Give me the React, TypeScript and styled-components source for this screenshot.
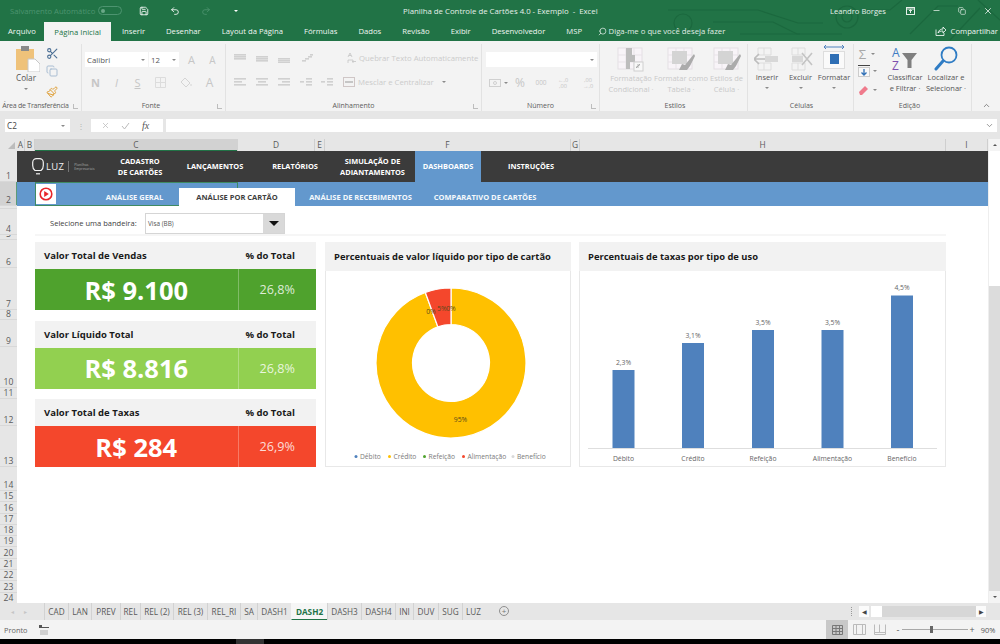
import React from "react";
import styled, { createGlobalStyle } from "styled-components";
import { Save, Undo2, Redo2, Scissors, Copy, Paintbrush, Search, X, Minus, ChevronDown, ChevronUp } from "lucide-react";

const GlobalStyle = createGlobalStyle`
  html, body { margin: 0; padding: 0; background: #000; }
  * { box-sizing: border-box; }
  #root { font-family: "Open Sans", "Liberation Sans", sans-serif; }
`;

const Screen = styled.div`
  width: 1000px;
  height: 644px;
  display: flex;
  flex-direction: column;
  overflow: hidden;
  position: relative;
  background: #000;
  color: #444;
`;

/* title bar + tabs share the green backdrop and the circuit drawing */
const GreenHead = styled.div`
  position: relative;
  height: 41px;
  flex: none;
  background: #217346;
  color: #f0f6f2;
  display: flex;
  flex-direction: column;
`;

const Circuit = styled.svg`
  position: absolute;
  left: 640px;
  top: 0;
  pointer-events: none;
`;

const TitleBar = styled.div`
  height: 21px;
  display: flex;
  align-items: center;
  font-size: 7.7px;
  position: relative;
  & > * { flex: none; }
`;

const AutoSave = styled.span`
  margin-left: 10px;
  width: 88px;
  color: #4d9470;
  white-space: nowrap;
`;

const Toggle = styled.span`
  width: 24px;
  height: 9px;
  border: 1px solid #4d9470;
  border-radius: 5px;
  display: flex;
  align-items: center;
  padding-left: 2px;
  &::before {
    content: "";
    width: 4px;
    height: 4px;
    border-radius: 50%;
    background: #6aa888;
  }
`;

const QuickBtn = styled.span<{ $w: number; $dim?: boolean }>`
  width: ${(p) => p.$w}px;
  display: flex;
  justify-content: center;
  color: ${(p) => (p.$dim ? "#4d9470" : "#fff")};
`;

const TitleGap = styled.span`
  width: 160px;
`;

const DocTitle = styled.span`
  width: 427px;
  white-space: pre;
  color: #e6f0ea;
  font-size: 7.8px;
`;

const UserName = styled.span`
  width: 67px;
  color: #e6f0ea;
  font-size: 7.6px;
`;

const WinBtn = styled.span`
  width: 26px;
  display: flex;
  justify-content: center;
  color: #e6f0ea;
`;

const TabRow = styled.div`
  height: 20px;
  display: flex;
  align-items: stretch;
  font-size: 7.7px;
  position: relative;
`;

const RibbonTab = styled.span<{ $active?: boolean; $first?: boolean }>`
  padding: 0 10.5px;
  display: flex;
  align-items: center;
  white-space: nowrap;
  ${(p) => p.$first && "margin:0 -2.5px;"}
  ${(p) => p.$active && "background:#f3f3f3;color:#217346;margin-top:1px;"}
`;

const TellMe = styled.span`
  display: flex;
  align-items: center;
  gap: 2px;
  margin-left: 5px;
  white-space: nowrap;
  font-size: 7.75px;
  color: #e0ece5;
`;

const Share = styled.span`
  margin-left: auto;
  padding-right: 2px;
  display: flex;
  align-items: center;
  gap: 5px;
  white-space: nowrap;
`;

/* ribbon */
const Ribbon = styled.div`
  height: 70px;
  flex: none;
  display: flex;
  background: #f3f3f3;
  font-size: 7.6px;
`;

const Group = styled.div<{ $w: number; $pad?: number }>`
  width: ${(p) => p.$w}px;
  flex: none;
  position: relative;
  display: flex;
  flex-direction: column;
  padding-left: ${(p) => p.$pad ?? 0}px;
  border-right: 1px solid #e2e2e2;
  margin: 3px 0 0;
`;

const GroupBody = styled.div<{ $top?: number; $gap?: number; $row?: boolean }>`
  flex: 1;
  display: flex;
  flex-direction: ${(p) => (p.$row ? "row" : "column")};
  padding-top: ${(p) => p.$top ?? 8}px;
  gap: ${(p) => p.$gap ?? 0}px;
  min-height: 0;
`;

const GroupLabel = styled.div<{ $shift?: number; $tight?: boolean }>`
  height: 11px;
  flex: none;
  margin-left: ${(p) => p.$shift ?? 0}px;
  text-align: center;
  color: #5c5c5c;
  font-size: 7px;
  line-height: 12px;
  letter-spacing: ${(p) => (p.$tight ? "-0.25px" : "0")};
  white-space: nowrap;
`;

const Launcher = styled.i`
  position: absolute;
  right: 3px;
  bottom: 2px;
  width: 5px;
  height: 5px;
  border-left: 1px solid #bdbdbd;
  border-bottom: 1px solid #bdbdbd;
`;

const ToolRow = styled.div<{ $h?: number; $mt?: number }>`
  display: flex;
  align-items: center;
  height: ${(p) => p.$h ?? 15}px;
  margin-top: ${(p) => p.$mt ?? 0}px;
  flex: none;
`;

const Cell = styled.span<{ $w: number; $dim?: boolean; $size?: number; $bold?: boolean }>`
  width: ${(p) => p.$w}px;
  flex: none;
  display: flex;
  align-items: center;
  justify-content: center;
  color: ${(p) => (p.$dim ? "#c6c6c6" : "#555")};
  font-size: ${(p) => p.$size ?? 8}px;
  font-weight: ${(p) => (p.$bold ? 700 : 400)};
  white-space: nowrap;
`;

const DecimalGlyph = styled.span<{ $w: number }>`
  width: ${(p) => p.$w}px;
  flex: none;
  display: flex;
  flex-direction: column;
  align-items: center;
  color: #c6c6c6;
  font-size: 5.6px;
  line-height: 6px;
`;

const SelectBox = styled.span<{ $w: number }>`
  width: ${(p) => p.$w}px;
  height: 15px;
  background: #fff;
  flex: none;
  display: flex;
  align-items: center;
  justify-content: space-between;
  padding: 0 3px 0 2px;
  color: #555;
  font-size: 7.8px;
  margin-right: 1px;
`;

const Caret = styled.i`
  width: 0;
  height: 0;
  border-left: 2px solid transparent;
  border-right: 2px solid transparent;
  border-top: 2px solid #8a8a8a;
  flex: none;
`;

const DimText = styled.span`
  color: #cbcbcb;
  font-size: 7.75px;
  white-space: nowrap;
`;

const BigBtn = styled.div<{ $w: number; $dim?: boolean }>`
  width: ${(p) => p.$w}px;
  flex: none;
  display: flex;
  flex-direction: column;
  align-items: center;
  color: ${(p) => (p.$dim ? "#c9c9c9" : "#555")};
  font-size: 7.5px;
  line-height: 11px;
  white-space: nowrap;
`;

const BigIcon = styled.div`
  height: 25px;
  margin-bottom: 1px;
  flex: none;
  display: flex;
  align-items: flex-end;
`;

const Stack = styled.div<{ $w: number }>`
  width: ${(p) => p.$w}px;
  flex: none;
  display: flex;
  flex-direction: column;
  align-items: center;
`;

const CollapseBtn = styled.div`
  flex: 1;
  display: flex;
  align-items: flex-end;
  justify-content: center;
  padding-bottom: 1px;
  color: #666;
`;

/* formula bar */
const FormulaBar = styled.div`
  height: 28px;
  flex: none;
  background: #e6e6e6;
  display: flex;
  align-items: flex-start;
  padding: 8px 3px 0 5px;
`;

const NameBox = styled.div`
  width: 65px;
  height: 13px;
  background: #fff;
  display: flex;
  align-items: center;
  justify-content: space-between;
  padding: 0 5px 0 2px;
  font-size: 8.2px;
  color: #444;
`;

const Grip = styled.div`
  width: 21px;
  height: 13px;
  display: flex;
  justify-content: center;
  align-items: center;
  color: #b5b5b5;
  font-size: 8px;
`;

const FxBox = styled.div`
  width: 72px;
  height: 13px;
  background: #fff;
  display: flex;
  align-items: center;
  justify-content: space-around;
  padding: 0 8px 0 4px;
  color: #bbb;
  margin-right: 3px;
`;

const Fx = styled.i`
  font-family: "Liberation Serif", serif;
  font-size: 10px;
  color: #555;
`;

const FormulaInput = styled.div`
  flex: 1;
  height: 13px;
  background: #fff;
  display: flex;
  align-items: center;
  justify-content: flex-end;
  padding-right: 3px;
  color: #777;
`;

/* sheet */
const Workspace = styled.div`
  flex: 1;
  min-height: 0;
  display: flex;
  background: #fff;
`;

const SheetArea = styled.div`
  flex: 1;
  min-width: 0;
  display: flex;
  flex-direction: column;
`;

const ColHeaders = styled.div`
  height: 12px;
  flex: none;
  display: flex;
  background: #e6e6e6;
`;

const Corner = styled.div`
  width: 17px;
  flex: none;
  display: flex;
  justify-content: flex-end;
  align-items: flex-end;
  padding: 0 2px 2px 0;
  &::after {
    content: "";
    border-left: 7px solid transparent;
    border-bottom: 7px solid #bcbcbc;
  }
`;

const ColHead = styled.div<{ $w: number; $sel?: boolean }>`
  width: ${(p) => p.$w}px;
  flex: none;
  text-align: center;
  font-size: 8.4px;
  line-height: 12px;
  color: #5a5a5a;
  border-right: 1px solid ${(p) => (p.$sel ? "transparent" : "#cfcfcf")};
  background: ${(p) => (p.$sel ? "#d2d2d2" : "transparent")};
  ${(p) => p.$sel && "box-shadow: inset 0 -1px 0 #217346;"}
`;

const SheetBody = styled.div`
  flex: 1;
  min-height: 0;
  display: flex;
`;

const RowHeaders = styled.div`
  width: 17px;
  flex: none;
  background: #e6e6e6;
  overflow: hidden;
`;

const RowHead = styled.div<{ $h: number; $sel?: boolean }>`
  height: ${(p) => p.$h}px;
  font-size: 8.6px;
  line-height: 10px;
  color: #5a5a5a;
  text-align: center;
  display: flex;
  align-items: flex-end;
  justify-content: center;
  overflow: hidden;
  border-bottom: 1px solid #d8d8d8;
  background: ${(p) => (p.$sel ? "#d2d2d2" : "transparent")};
  ${(p) => p.$sel && "box-shadow: inset -1px 0 0 #5c9b78;"}
`;

const Dashboard = styled.div`
  flex: 1;
  min-width: 0;
  display: flex;
  flex-direction: column;
`;

const NavBar = styled.div`
  height: 31px;
  flex: none;
  display: flex;
  background: #3b3b3b;
  color: #fff;
`;

const LogoBox = styled.div`
  width: 88px;
  flex: none;
  display: flex;
  align-items: center;
  padding-left: 15px;
  gap: 2px;
`;

const LogoWord = styled.span`
  font-size: 9.5px;
  letter-spacing: 0.3px;
  color: #f2f2f2;
  padding-right: 4px;
  border-right: 1px solid #777;
  line-height: 11px;
`;

const LogoSub = styled.span`
  font-size: 3.4px;
  line-height: 4px;
  color: #aaa;
  margin-left: 3px;
`;

const NavItem = styled.div<{ $w: number; $active?: boolean; $endPad?: number }>`
  width: ${(p) => p.$w}px;
  flex: none;
  display: flex;
  align-items: center;
  justify-content: center;
  padding-right: ${(p) => p.$endPad ?? 0}px;
  text-align: center;
  font-size: 7.4px;
  line-height: 11px;
  font-weight: 700;
  background: ${(p) => (p.$active ? "#6398cd" : "transparent")};
`;

const SubBar = styled.div`
  height: 24px;
  flex: none;
  position: relative;
  display: flex;
  align-items: flex-end;
  background: #6398cd;
  color: #fff;
`;

const CellSelection = styled.div`
  position: absolute;
  left: 18px;
  top: 0;
  width: 203px;
  height: 24px;
  border: 1px solid #3f8a62;
  pointer-events: none;
`;

const PlayBtn = styled.div`
  position: absolute;
  left: 19px;
  top: 2px;
  width: 20px;
  height: 20px;
  background: #fff;
  display: flex;
  align-items: center;
  justify-content: center;
`;

const SubGap = styled.span<{ $w: number }>`
  width: ${(p) => p.$w}px;
  flex: none;
`;

const SubItem = styled.div<{ $w: number; $active?: boolean }>`
  width: ${(p) => p.$w}px;
  height: 18px;
  flex: none;
  position: relative;
  display: flex;
  align-items: center;
  justify-content: center;
  font-size: 7.5px;
  font-weight: 700;
  white-space: nowrap;
  background: ${(p) => (p.$active ? "#fff" : "transparent")};
  color: ${(p) => (p.$active ? "#3f3f3f" : "#f4f8fc")};
`;

const SelectorRow = styled.div`
  height: 30px;
  flex: none;
  width: 911px;
  display: flex;
  align-items: flex-start;
  padding: 7px 0 0 15px;
  margin-left: 18px;
  border-bottom: 2px solid #f6f6f6;
`;

const SelectorLabel = styled.span`
  width: 95px;
  flex: none;
  font-size: 7.55px;
  line-height: 20px;
  color: #404040;
  white-space: nowrap;
`;

const Combo = styled.div`
  width: 140px;
  height: 21px;
  border: 1px solid #d5d5d5;
  display: flex;
  align-items: center;
  justify-content: space-between;
  padding-left: 2px;
  font-size: 6.4px;
  color: #555;
`;

const ComboArrow = styled.div`
  width: 21px;
  height: 19px;
  background: #d9d9d9;
  display: flex;
  align-items: center;
  justify-content: center;
  &::after {
    content: "";
    border-left: 5px solid transparent;
    border-right: 5px solid transparent;
    border-top: 5px solid #111;
  }
`;

const Panels = styled.div`
  display: flex;
  padding: 6px 0 0 18px;
  gap: 9px;
`;

const KpiColumn = styled.div`
  width: 281px;
  flex: none;
  display: flex;
  flex-direction: column;
  gap: 10.5px;
`;

const Kpi = styled.div`
  display: grid;
  grid-template-columns: 202.5px 1fr;
  grid-template-rows: 27px 41px;
`;

const KpiHead = styled.div<{ $center?: boolean }>`
  background: #f2f2f2;
  display: flex;
  align-items: center;
  justify-content: ${(p) => (p.$center ? "center" : "flex-start")};
  padding: ${(p) => (p.$center ? "0 13px 0 0" : "0 0 0 9px")};
  font-size: 9.5px;
  font-weight: 700;
  color: #1a1a1a;
  white-space: nowrap;
`;

const KpiValue = styled.div<{ $bg: string }>`
  background: ${(p) => p.$bg};
  color: #fff;
  display: flex;
  align-items: center;
  justify-content: center;
  font-size: 25.5px;
  font-weight: 700;
  white-space: nowrap;
`;

const KpiPct = styled.div<{ $bg: string }>`
  background: ${(p) => p.$bg};
  border-left: 1px solid rgba(255, 255, 255, 0.28);
  color: rgba(255, 255, 255, 0.82);
  display: flex;
  align-items: center;
  justify-content: center;
  font-size: 12.6px;
`;

const ChartCard = styled.div<{ $w: number; $pull?: number }>`
  width: ${(p) => p.$w}px;
  height: 225px;
  flex: none;
  margin-left: ${(p) => p.$pull ?? 0}px;
  border: 1px solid #e8e8e8;
  border-top: 0;
  display: flex;
  flex-direction: column;
`;

const ChartHead = styled.div`
  height: 29px;
  flex: none;
  background: #f2f2f2;
  margin: 0 -1px;
  padding-left: 9px;
  display: flex;
  align-items: center;
  font-size: 9.4px;
  font-weight: 700;
  color: #1a1a1a;
  white-space: nowrap;
`;

const ChartSvg = styled.svg`
  display: block;
  flex: 1;
  font-family: "Open Sans", "Liberation Sans", sans-serif;
`;

/* right scrollbar */
const VScroll = styled.div`
  width: 12px;
  flex: none;
  display: flex;
  flex-direction: column;
  background: #dcdcdc;
  border-left: 1px solid #eee;
`;

const ScrollArrow = styled.div`
  height: 12px;
  flex: none;
  background: #f4f4f4;
  display: flex;
  align-items: center;
  justify-content: center;
  color: #555;
`;

const ScrollThumb = styled.div`
  height: 135px;
  flex: none;
  background: #fff;
`;

const ScrollFill = styled.div`
  flex: 1;
`;

/* sheet tabs */
const SheetTabs = styled.div`
  height: 17px;
  flex: none;
  display: flex;
  align-items: stretch;
  background: #e6e6e6;
  padding-left: 11px;
  font-size: 8.2px;
  color: #5a5a5a;
`;

const TabNav = styled.div`
  width: 33px;
  flex: none;
  display: flex;
  align-items: center;
  gap: 10px;
  color: #c5c5c5;
  font-size: 6px;
`;

const SheetTab = styled.div<{ $w: number; $active?: boolean }>`
  width: ${(p) => p.$w}px;
  flex: none;
  display: flex;
  align-items: center;
  justify-content: center;
  white-space: nowrap;
  border-left: 1px solid #d2d2d2;
  ${(p) =>
    p.$active &&
    "background:#f6f6f6;color:#217346;font-weight:700;border-bottom:1.5px solid #217346;border-left-color:transparent;"}
`;

const AddSheet = styled.div`
  width: 10px;
  height: 10px;
  margin: 3px 0 0 15px;
  border: 1px solid #8f8f8f;
  border-radius: 50%;
  display: flex;
  align-items: center;
  justify-content: center;
  font-size: 8px;
  line-height: 8px;
  color: #777;
`;

const HScrollWrap = styled.div`
  margin-left: auto;
  display: flex;
  align-items: center;
  padding-right: 14px;
`;

const HScrollDots = styled.div`
  width: 4px;
  height: 9px;
  margin-right: 4px;
  border-left: 1px dotted #999;
`;

const HScrollBtn = styled.div`
  width: 10px;
  height: 11px;
  background: #fbfbfb;
  display: flex;
  align-items: center;
  justify-content: center;
  color: #444;
  font-size: 6px;
`;

const HScrollThumb = styled.div`
  width: 11px;
  height: 11px;
  margin-left: 2px;
  background: #fff;
`;

const HScrollTrack = styled.div`
  width: 94px;
  height: 11px;
  background: #d7d7d7;
`;

/* status bar */
const StatusBar = styled.div`
  height: 19px;
  flex: none;
  display: flex;
  align-items: center;
  background: #f3f3f3;
  padding-left: 4px;
  font-size: 7.4px;
  color: #666;
`;

const StatusIcon = styled.svg`
  margin-left: 11px;
`;

const StatusRight = styled.div`
  margin-left: auto;
  height: 100%;
  display: flex;
  align-items: center;
  padding-right: 4px;
`;

const ViewBtn = styled.div<{ $on?: boolean; $w: number }>`
  width: ${(p) => p.$w}px;
  height: 100%;
  display: flex;
  align-items: center;
  justify-content: center;
  background: ${(p) => (p.$on ? "#c8c8c8" : "transparent")};
`;

const StatusGap = styled.span<{ $w: number }>`
  width: ${(p) => p.$w}px;
  flex: none;
`;

const Zoomer = styled.div`
  width: 66px;
  height: 1px;
  background: #a8a8a8;
  position: relative;
`;

const ZoomThumb = styled.i`
  position: absolute;
  left: 28px;
  top: -3px;
  width: 3px;
  height: 7px;
  background: #666;
`;

const BlackEdge = styled.div`
  height: 5px;
  flex: none;
  background: #000;
  display: flex;
  padding-left: 236px;
  &::before {
    content: "";
    width: 28px;
    background: #333;
  }
`;

const Bars = ({ w = 12, h = 10, c = "#d0d0d0", rows }: { w?: number; h?: number; c?: string; rows: [number, number, number][] }) => (
  <svg width={w} height={h} viewBox={`0 0 ${w} ${h}`}>
    {rows.map(([x, y, l], i) => (
      <rect key={i} x={x} y={y} width={l} height={1.6} fill={c} />
    ))}
  </svg>
);

const leftLines: [number, number, number][] = [[0, 1, 12], [0, 4, 8], [0, 7, 12]];
const centerLines: [number, number, number][] = [[0, 1, 12], [2, 4, 8], [0, 7, 12]];
const rightLines: [number, number, number][] = [[0, 1, 12], [4, 4, 8], [0, 7, 12]];

const StyleIcon = ({ kind }: { kind: number }) => (
  <svg width="28" height="25" viewBox="0 0 28 25">
    <rect x="1" y="1" width="24" height="21" fill="#f8f4f8" stroke="#e4dfe4" />
    <path d="M9 1v21M17 1v21M1 8h24M1 15h24" stroke="#e8e3e8" />
    {kind === 0 ? (
      <>
        <path d="M9 1h6v7h3v7h-5v7H9z" fill="#bdbdbd" />
        <rect x="17" y="15" width="9" height="9" fill="#f8f8f8" stroke="#d0d0d0" />
        <path d="M19 21l4-4M20 18h3M19 20h3" stroke="#999" strokeWidth=".7" />
      </>
    ) : (
      <>
        <rect x="5" y="4" width="15" height="13" fill="#d4d4d4" />
        <path d="M27 7l-9 11-3-1 -3 6h8l3-4 5-10z" fill="#ababab" />
      </>
    )}
  </svg>
);

const CellIcon = ({ kind }: { kind: "ins" | "del" }) => (
  <svg width="26" height="24" viewBox="0 0 26 24">
    <path d="M4 1h13v7H4zM4 16h13v7H4zM10 1v7M10 16v7" fill="none" stroke="#ddd" />
    {kind === "ins" ? (
      <>
        <rect x="11" y="9" width="13" height="6" fill="#d8d8d8" />
        <path d="M0 12h11M5 7l-5 5 5 5" fill="none" stroke="#bdbdbd" strokeWidth="1.6" />
      </>
    ) : (
      <>
        <rect x="4" y="9" width="11" height="6" fill="#d8d8d8" />
        <path d="M14 6l10 12M24 6L14 18" stroke="#c4c4c4" strokeWidth="1.6" />
      </>
    )}
  </svg>
);

const cols: [string, number, boolean?][] = [
  ["A", 8],
  ["B", 10],
  ["C", 203, true],
  ["D", 77],
  ["E", 10],
  ["F", 246],
  ["G", 9],
  ["H", 366],
  ["I", 42],
];

const rowHeights = [31, 24, 3, 26, 5, 28, 42, 10, 27, 41, 11, 27, 41, 24, 11.3, 11.3, 11.3, 11.3, 11.3, 11.3, 11.3, 11.3, 11.3, 11.3];

const sheets: [string, number][] = [
  ["CAD", 24], ["LAN", 23], ["PREV", 29], ["REL", 20], ["REL (2)", 33], ["REL (3)", 34], ["REL_RI", 33], ["SA", 17],
  ["DASH1", 34], ["DASH2", 36], ["DASH3", 34], ["DASH4", 34], ["INI", 18], ["DUV", 25], ["SUG", 24], ["LUZ", 22],
];

const kpis = [
  { title: "Valor Total de Vendas", value: "R$ 9.100", pct: "26,8%", color: "#4fa22d" },
  { title: "Valor Líquido Total", value: "R$ 8.816", pct: "26,8%", color: "#92d050" },
  { title: "Valor Total de Taxas", value: "R$ 284", pct: "26,9%", color: "#f4472c" },
];

const legend = [
  { name: "Débito", color: "#4f81bd", x: 356 },
  { name: "Crédito", color: "#ffc000", x: 389.5 },
  { name: "Refeição", color: "#4fa22d", x: 424.5 },
  { name: "Alimentação", color: "#f4472c", x: 463.5 },
  { name: "Benefício", color: "#d9d9d9", x: 513 },
];

const barData = [
  { name: "Débito", label: "2,3%", x: 612.5, top: 370 },
  { name: "Crédito", label: "3,1%", x: 682, top: 343 },
  { name: "Refeição", label: "3,5%", x: 752, top: 330 },
  { name: "Alimentação", label: "3,5%", x: 821.5, top: 330 },
  { name: "Benefício", label: "4,5%", x: 891, top: 295.5 },
];

const ring = (a0: number, a1: number, cx = 451, cy = 363, R = 75, r = 38.5) => {
  const pt = (rad: number, a: number) => {
    const t = ((a - 90) * Math.PI) / 180;
    return `${cx + rad * Math.cos(t)} ${cy + rad * Math.sin(t)}`;
  };
  const large = a1 - a0 > 180 ? 1 : 0;
  return `M${pt(R, a0)}A${R} ${R} 0 ${large} 1 ${pt(R, a1)}L${pt(r, a1)}A${r} ${r} 0 ${large} 0 ${pt(r, a0)}Z`;
};

const App = () => {
  return (
    <Screen>
      <GlobalStyle />
      <GreenHead>
        <Circuit width="360" height="41" viewBox="640 0 360 41" fill="none" stroke="#1b683e" strokeWidth="1.2">
          <path d="M668 10h90l40 13h25" />
          <circle cx="683" cy="23" r="9" />
          <path d="M713 22h60l24 12h45" />
          <path d="M740 34h60" />
          <circle cx="847" cy="17" r="11" />
          <circle cx="847" cy="17" r="5" />
          <path d="M860 10h30l12-10M910 34l28-28h20M950 40l30-32M978 0l22 20" />
        </Circuit>
        <TitleBar>
          <AutoSave>Salvamento Automático</AutoSave>
          <Toggle />
          <QuickBtn $w={44}><Save size={10} /></QuickBtn>
          <QuickBtn $w={18}><Undo2 size={10} /></QuickBtn>
          <QuickBtn $w={44} $dim><Redo2 size={10} /></QuickBtn>
          <QuickBtn $w={15}><Caret style={{ borderTopColor: "#fff" }} /></QuickBtn>
          <TitleGap />
          <DocTitle>Planilha de Controle de Cartões 4.0 - Exemplo  -  Excel</DocTitle>
          <UserName>Leandro Borges</UserName>
          <WinBtn>
            <svg width="9" height="8" viewBox="0 0 9 8" fill="none" stroke="#e6f0ea"><rect x=".5" y=".5" width="8" height="7" /><path d="M4.5 6V3M3 4l1.5-1.5L6 4M.5 2h8" /></svg>
          </WinBtn>
          <WinBtn><Minus size={9} /></WinBtn>
          <WinBtn><Copy size={8} /></WinBtn>
          <WinBtn><X size={10} /></WinBtn>
        </TitleBar>
        <TabRow>
          <RibbonTab $first>Arquivo</RibbonTab>
          <RibbonTab $active>Página Inicial</RibbonTab>
          <RibbonTab>Inserir</RibbonTab>
          <RibbonTab>Desenhar</RibbonTab>
          <RibbonTab>Layout da Página</RibbonTab>
          <RibbonTab>Fórmulas</RibbonTab>
          <RibbonTab>Dados</RibbonTab>
          <RibbonTab>Revisão</RibbonTab>
          <RibbonTab>Exibir</RibbonTab>
          <RibbonTab>Desenvolvedor</RibbonTab>
          <RibbonTab>MSP</RibbonTab>
          <TellMe><Search size={9} style={{ transform: "scaleX(-1)" }} />Diga-me o que você deseja fazer</TellMe>
          <Share>
            <svg width="11" height="10" viewBox="0 0 11 10" fill="none" stroke="#fff" strokeWidth=".8"><path d="M1 3.5v6h8V7M3 7c.5-2.500 2.500-4 5-4V1l3 3-3 3V5C6 5 4 5.500 3 7z" /></svg>
            Compartilhar
          </Share>
        </TabRow>
      </GreenHead>

      <Ribbon>
        <Group $w={82}>
          <GroupBody $row $top={2}>
            <Stack $w={52}>
              <svg width="24" height="26" viewBox="0 0 24 26" style={{ marginLeft: 4 }}>
                <rect x="0" y="3" width="18" height="21" fill="#efc27a" />
                <rect x="5" y="0" width="8" height="5" fill="#8a8a8a" />
                <path d="M12 13h7l5 5v8H12z" fill="#fff" stroke="#c8c8c8" />
              </svg>
              <Cell $w={52} $size={8.2} style={{ lineHeight: "12px" }}>Colar</Cell>
              <Caret style={{ marginTop: 4 }} />
            </Stack>
            <Stack $w={0}>
              <Cell $w={20} style={{ color: "#4a6e94", marginTop: 1 }}><Scissors size={13} /></Cell>
              <Cell $w={20} style={{ color: "#a9bdd2", marginTop: 5 }}><Copy size={12} /></Cell>
              <Cell $w={20} style={{ color: "#e0a13a", marginTop: 9 }}><Paintbrush size={12} /></Cell>
            </Stack>
          </GroupBody>
          <GroupLabel $shift={-10} $tight>Área de Transferência</GroupLabel>
          <Launcher />
        </Group>

        <Group $w={144} $pad={3}>
          <GroupBody>
            <ToolRow>
              <SelectBox $w={63}>Calibri<Caret /></SelectBox>
              <SelectBox $w={30}>12<Caret /></SelectBox>
              <Cell $w={23} $dim $size={11}>A</Cell>
              <Cell $w={19} $dim $size={10}>A</Cell>
            </ToolRow>
            <ToolRow $mt={8}>
              <Cell $w={21} $dim $size={11} $bold>N</Cell>
              <Cell $w={21} $dim $size={11}><i>I</i></Cell>
              <Cell $w={21} $dim $size={11} style={{ textDecoration: "underline" }}>S</Cell>
              <Cell $w={25} $dim>
                <svg width="11" height="11" viewBox="0 0 11 11" fill="none" stroke="#dcdcdc"><path d="M.5.500h10v10H.5zM5.500.500v10M.5 5.500h10" /></svg>
              </Cell>
              <Cell $w={25} $dim>
                <svg width="12" height="11" viewBox="0 0 12 11" fill="none" stroke="#d4d4d4"><path d="M5 1l5 5-4 4-5-5z" /><path d="M11 7v2" /></svg>
              </Cell>
              <Cell $w={23} $dim $size={12}>A</Cell>
            </ToolRow>
          </GroupBody>
          <GroupLabel $shift={-8}>Fonte</GroupLabel>
          <Launcher />
        </Group>

        <Group $w={256} $pad={3}>
          <GroupBody $top={5}>
            <ToolRow $h={17}>
              <Cell $w={22}><Bars rows={[[0, 1, 12], [0, 3, 12], [0, 5, 12]]} /></Cell>
              <Cell $w={22}><Bars rows={[[0, 3, 12], [0, 5, 12], [0, 7, 12]]} /></Cell>
              <Cell $w={22}><Bars rows={[[0, 5, 12], [0, 7, 12], [0, 9, 12]]} /></Cell>
              <Cell $w={24}><Bars rows={[[1, 7, 4], [4, 5, 4], [7, 3, 4], [9, 1, 3]]} /></Cell>
              <Cell $w={26} />
              <Cell $w={14}>
                <svg width="10" height="12" viewBox="0 0 10 12" fill="none" stroke="#c4c4c4" strokeWidth=".8"><path d="M1 5l2-4 2 4M1.800 3.500h2.400M1 11V8h5v3M5 9.500h4" /></svg>
              </Cell>
              <DimText>Quebrar Texto Automaticamente</DimText>
            </ToolRow>
            <ToolRow $h={15} $mt={8}>
              <Cell $w={22}><Bars rows={leftLines} /></Cell>
              <Cell $w={22}><Bars rows={centerLines} /></Cell>
              <Cell $w={22}><Bars rows={rightLines} /></Cell>
              <Cell $w={21}><Bars rows={[[6, 1, 6], [6, 4, 6], [6, 7, 6], [0, 4, 4]]} /></Cell>
              <Cell $w={22}><Bars rows={[[6, 1, 6], [6, 4, 6], [6, 7, 6], [0, 4, 4]]} /></Cell>
              <Cell $w={22}>
                <svg width="12" height="10" viewBox="0 0 12 10" fill="none" stroke="#cfc6c6"><rect x=".5" y=".5" width="11" height="9" /><path d="M2 5h8" stroke="#999" /></svg>
              </Cell>
              <DimText style={{ marginLeft: -2 }}>Mesclar e Centralizar</DimText>
              <Caret style={{ marginLeft: 8 }} />
            </ToolRow>
          </GroupBody>
          <GroupLabel $shift={-3}>Alinhamento</GroupLabel>
          <Launcher />
        </Group>

        <Group $w={118} $pad={4}>
          <GroupBody>
            <ToolRow>
              <SelectBox $w={111}><span /><Caret /></SelectBox>
            </ToolRow>
            <ToolRow $mt={8}>
              <Cell $w={18}>
                <svg width="12" height="10" viewBox="0 0 12 10" fill="none" stroke="#d0d0d0"><rect x=".5" y="1.500" width="11" height="7" /><circle cx="6" cy="5" r="1.500" /></svg>
              </Cell>
              <Caret />
              <Cell $w={24} $dim $size={12}>%</Cell>
              <Cell $w={18} $dim $size={6.5}>000</Cell>
              <DecimalGlyph $w={26}><span>←,0</span><span>,00</span></DecimalGlyph>
              <DecimalGlyph $w={24}><span>,00</span><span>→,0</span></DecimalGlyph>
            </ToolRow>
          </GroupBody>
          <GroupLabel $shift={-4}>Número</GroupLabel>
          <Launcher />
        </Group>

        <Group $w={148} $pad={3}>
          <GroupBody $row $top={3}>
            <BigBtn $w={56} $dim><BigIcon><StyleIcon kind={0} /></BigIcon><span>Formatação</span><span>Condicional ·</span></BigBtn>
            <BigBtn $w={44} $dim><BigIcon><StyleIcon kind={1} /></BigIcon><span>Formatar como</span><span>Tabela ·</span></BigBtn>
            <BigBtn $w={47} $dim><BigIcon><StyleIcon kind={2} /></BigIcon><span>Estilos de</span><span>Célula ·</span></BigBtn>
          </GroupBody>
          <GroupLabel>Estilos</GroupLabel>
        </Group>

        <Group $w={106} $pad={2}>
          <GroupBody $row $top={2}>
            <BigBtn $w={34}><BigIcon><CellIcon kind="ins" /></BigIcon><span>Inserir</span><Caret style={{ marginTop: 4 }} /></BigBtn>
            <BigBtn $w={33}><BigIcon><CellIcon kind="del" /></BigIcon><span>Excluir</span><Caret style={{ marginTop: 4 }} /></BigBtn>
            <BigBtn $w={34}>
              <BigIcon>
                <svg width="24" height="27" viewBox="0 0 24 27">
                  <path d="M2 3h20M2 3l2-2M2 3l2 2M22 3l-2-2M22 3l-2 2" stroke="#4f81bd" fill="none" />
                  <rect x="1.500" y="7.500" width="21" height="17" fill="#fafafa" stroke="#ddd" />
                  <rect x="8" y="10" width="9" height="10" fill="#2f6fb5" />
                </svg>
              </BigIcon>
              <span>Formatar</span>
              <Caret style={{ marginTop: 4 }} />
            </BigBtn>
          </GroupBody>
          <GroupLabel>Células</GroupLabel>
        </Group>

        <Group $w={118}>
          <GroupBody $row $top={2}>
            <Stack $w={26}>
              <Cell $w={26} $size={13} $dim style={{ height: 15, color: "#a8a8a8", gap: 5 }}>Σ<Caret /></Cell>
              <Cell $w={26} style={{ height: 19, gap: 3 }}>
                <svg width="12" height="12" viewBox="0 0 12 12" fill="none"><path d="M0 .500h12" stroke="#444" /><rect x=".5" y="2.500" width="11" height="9" fill="#f8f8f8" stroke="#ccc" /><path d="M6 4v6M3.500 7.500L6 10l2.500-2.500" stroke="#2f6fb5" strokeWidth="1.300" /></svg>
                <Caret />
              </Cell>
              <Cell $w={26} style={{ height: 20, gap: 4 }}>
                <svg width="11" height="10" viewBox="0 0 11 10"><path d="M1 7l6-6 3 3-6 6H2z" fill="#ef7b8c" /></svg>
                <Caret />
              </Cell>
            </Stack>
            <BigBtn $w={50}>
              <BigIcon>
                <svg width="28" height="24" viewBox="0 0 28 24">
                  <text x="1" y="10" fontSize="12" fontFamily="Open Sans" fill="#3f7cc4">A</text>
                  <text x="1" y="23" fontSize="12" fontFamily="Open Sans" fill="#7d4fae">Z</text>
                  <path d="M11 6h15l-5.500 7v8h-4v-8z" fill="#7f7f7f" />
                </svg>
              </BigIcon>
              <span>Classificar</span>
              <span>e Filtrar ·</span>
            </BigBtn>
            <BigBtn $w={32}>
              <BigIcon>
                <svg width="24" height="25" viewBox="0 0 24 25" fill="none" stroke="#2f7cc4">
                  <circle cx="15" cy="9" r="7.500" strokeWidth="1.800" />
                  <path d="M9 15l-7 8" strokeWidth="3" strokeLinecap="round" />
                </svg>
              </BigIcon>
              <span>Localizar e</span>
              <span>Selecionar ·</span>
            </BigBtn>
          </GroupBody>
          <GroupLabel $shift={-6}>Edição</GroupLabel>
        </Group>

        <CollapseBtn><ChevronUp size={9} /></CollapseBtn>
      </Ribbon>

      <FormulaBar>
        <NameBox>C2<Caret /></NameBox>
        <Grip>⋮</Grip>
        <FxBox><X size={9} /><svg width="9" height="8" viewBox="0 0 9 8" fill="none" stroke="#bbb"><path d="M1 4l2.500 3L8 1" /></svg><Fx>fx</Fx></FxBox>
        <FormulaInput><ChevronDown size={9} /></FormulaInput>
      </FormulaBar>

      <Workspace>
        <SheetArea>
          <ColHeaders>
            <Corner />
            {cols.map(([name, w, sel]) => (
              <ColHead key={name} $w={w} $sel={sel}>{name}</ColHead>
            ))}
          </ColHeaders>
          <SheetBody>
            <RowHeaders>
              {rowHeights.map((h, i) => (
                <RowHead key={i} $h={h} $sel={i === 1}>{i + 1}</RowHead>
              ))}
            </RowHeaders>
            <Dashboard>
              <NavBar>
                <LogoBox>
                  <svg width="12" height="17" viewBox="0 0 12 17" fill="none" stroke="#f2f2f2" strokeWidth="1.200">
                    <path d="M3 12.500C1.500 11.500.7 9.800.7 7.500v-3C.7 2.300 2.500.7 4.500.7h3c2 0 3.800 1.600 3.800 3.800v3c0 2.300-.8 4-2.300 5z" />
                    <path d="M4 15.800h4" />
                  </svg>
                  <LogoWord>LUZ</LogoWord>
                  <LogoSub>Planilhas<br />Empresariais</LogoSub>
                </LogoBox>
                <NavItem $w={70}>CADASTRO<br />DE CARTÕES</NavItem>
                <NavItem $w={80}>LANÇAMENTOS</NavItem>
                <NavItem $w={80}>RELATÓRIOS</NavItem>
                <NavItem $w={80} $endPad={5}>SIMULAÇÃO DE<br />ADIANTAMENTOS</NavItem>
                <NavItem $w={66} $active>DASHBOARDS</NavItem>
                <NavItem $w={100}>INSTRUÇÕES</NavItem>
              </NavBar>
              <SubBar>
                <CellSelection />
                <PlayBtn>
                  <svg width="14" height="14" viewBox="0 0 14 14" fill="none">
                    <circle cx="7" cy="7" r="5.800" stroke="#e8262a" strokeWidth="1.600" />
                    <path d="M5.200 4l4.600 3-4.600 3z" fill="#e8262a" />
                  </svg>
                </PlayBtn>
                <SubGap $w={89} />
                <SubItem $w={57}>ANÁLISE GERAL</SubItem>
                <SubGap $w={16} />
                <SubItem $w={116} $active>ANÁLISE POR CARTÃO</SubItem>
                <SubGap $w={14} />
                <SubItem $w={103}>ANÁLISE DE RECEBIMENTOS</SubItem>
                <SubGap $w={21} />
                <SubItem $w={104}>COMPARATIVO DE CARTÕES</SubItem>
              </SubBar>
              <SelectorRow>
                <SelectorLabel>Selecione uma bandeira:</SelectorLabel>
                <Combo>Visa (BB)<ComboArrow /></Combo>
              </SelectorRow>
              <Panels>
                <KpiColumn>
                  {kpis.map((k) => (
                    <Kpi key={k.title}>
                      <KpiHead>{k.title}</KpiHead>
                      <KpiHead $center>% do Total</KpiHead>
                      <KpiValue $bg={k.color}>{k.value}</KpiValue>
                      <KpiPct $bg={k.color}>{k.pct}</KpiPct>
                    </Kpi>
                  ))}
                </KpiColumn>

                <ChartCard $w={246}>
                  <ChartHead>Percentuais de valor líquido por tipo de cartão</ChartHead>
                  <ChartSvg viewBox="326 271 244 195">
                    <path d={ring(0, 340)} fill="#ffc000" stroke="#fff" strokeWidth="1.200" />
                    <path d={ring(340, 360)} fill="#f4472c" stroke="#fff" strokeWidth="1.200" />
                    <g fontSize="6.8" fill="#5b4a1c" textAnchor="middle">
                      <text x="460.500" y="422">95%</text>
                      <text x="431" y="314">0%</text>
                      <text x="442" y="311">5%</text>
                      <text x="451" y="311">0%</text>
                    </g>
                    <g fontSize="6.7" fill="#7a7a7a">
                      {legend.map((l) => (
                        <g key={l.name}>
                          <circle cx={l.x} cy={456.500} r="1.500" fill={l.color} />
                          <text x={l.x + 4} y={459}>{l.name}</text>
                        </g>
                      ))}
                    </g>
                  </ChartSvg>
                </ChartCard>

                <ChartCard $w={367} $pull={-1}>
                  <ChartHead>Percentuais de taxas por tipo de uso</ChartHead>
                  <ChartSvg viewBox="580 271 365 195">
                    <path d="M588 448.500h349" stroke="#dedede" />
                    <g fontSize="6.8" fill="#666" textAnchor="middle">
                      {barData.map((b) => (
                        <g key={b.name}>
                          <rect x={b.x} y={b.top} width="22" height={448 - b.top} fill="#4f81bd" />
                          <text x={b.x + 11} y={b.top - 5.500}>{b.label}</text>
                          <text x={b.x + 11} y={460.500}>{b.name}</text>
                        </g>
                      ))}
                    </g>
                  </ChartSvg>
                </ChartCard>
              </Panels>
            </Dashboard>
          </SheetBody>
        </SheetArea>
        <VScroll>
          <ScrollArrow><Caret style={{ transform: "rotate(180deg)", borderTopColor: "#555" }} /></ScrollArrow>
          <ScrollThumb />
          <ScrollFill />
          <ScrollArrow><Caret style={{ borderTopColor: "#555" }} /></ScrollArrow>
        </VScroll>
      </Workspace>

      <SheetTabs>
        <TabNav><span>◂</span><span>▸</span></TabNav>
        {sheets.map(([name, w]) => (
          <SheetTab key={name} $w={w} $active={name === "DASH2"}>{name}</SheetTab>
        ))}
        <AddSheet>+</AddSheet>
        <HScrollWrap>
          <HScrollDots />
          <HScrollBtn>◀</HScrollBtn>
          <HScrollThumb />
          <HScrollTrack />
          <HScrollBtn>▶</HScrollBtn>
        </HScrollWrap>
      </SheetTabs>

      <StatusBar>
        Pronto
        <StatusIcon width="10" height="10" viewBox="0 0 10 10">
          <rect x="0" y="0" width="3" height="2" fill="#555" />
          <rect x="0" y="2" width="10" height="1" fill="#555" />
          <path d="M1 5h8v5H1z" fill="#d0d0d0" />
        </StatusIcon>
        <StatusRight>
          <ViewBtn $w={22} $on>
            <svg width="11" height="10" viewBox="0 0 11 10" fill="none" stroke="#777"><path d="M.5.500h10v9H.5zM4 .500v9M7.500.500v9M.5 3.500h10M.5 6.500h10" /></svg>
          </ViewBtn>
          <ViewBtn $w={23}>
            <svg width="13" height="11" viewBox="0 0 13 11" fill="none" stroke="#bbb"><path d="M.5.500h12v10H.5zM3.500.500v10M9.500.500v10" /></svg>
          </ViewBtn>
          <ViewBtn $w={18}>
            <svg width="12" height="11" viewBox="0 0 12 11" fill="none" stroke="#bbb"><path d="M.5 8.500h11M5.500.500v8M.5.500v10h11V.500" /></svg>
          </ViewBtn>
          <StatusGap $w={5} />
          <Cell $w={8} $size={9}>-</Cell>
          <Zoomer><ZoomThumb /></Zoomer>
          <Cell $w={8} $size={9}>+</Cell>
          <StatusGap $w={4} />
          <Cell $w={16} $size={7.4}>90%</Cell>
        </StatusRight>
      </StatusBar>
      <BlackEdge />
    </Screen>
  );
};

export default App;
